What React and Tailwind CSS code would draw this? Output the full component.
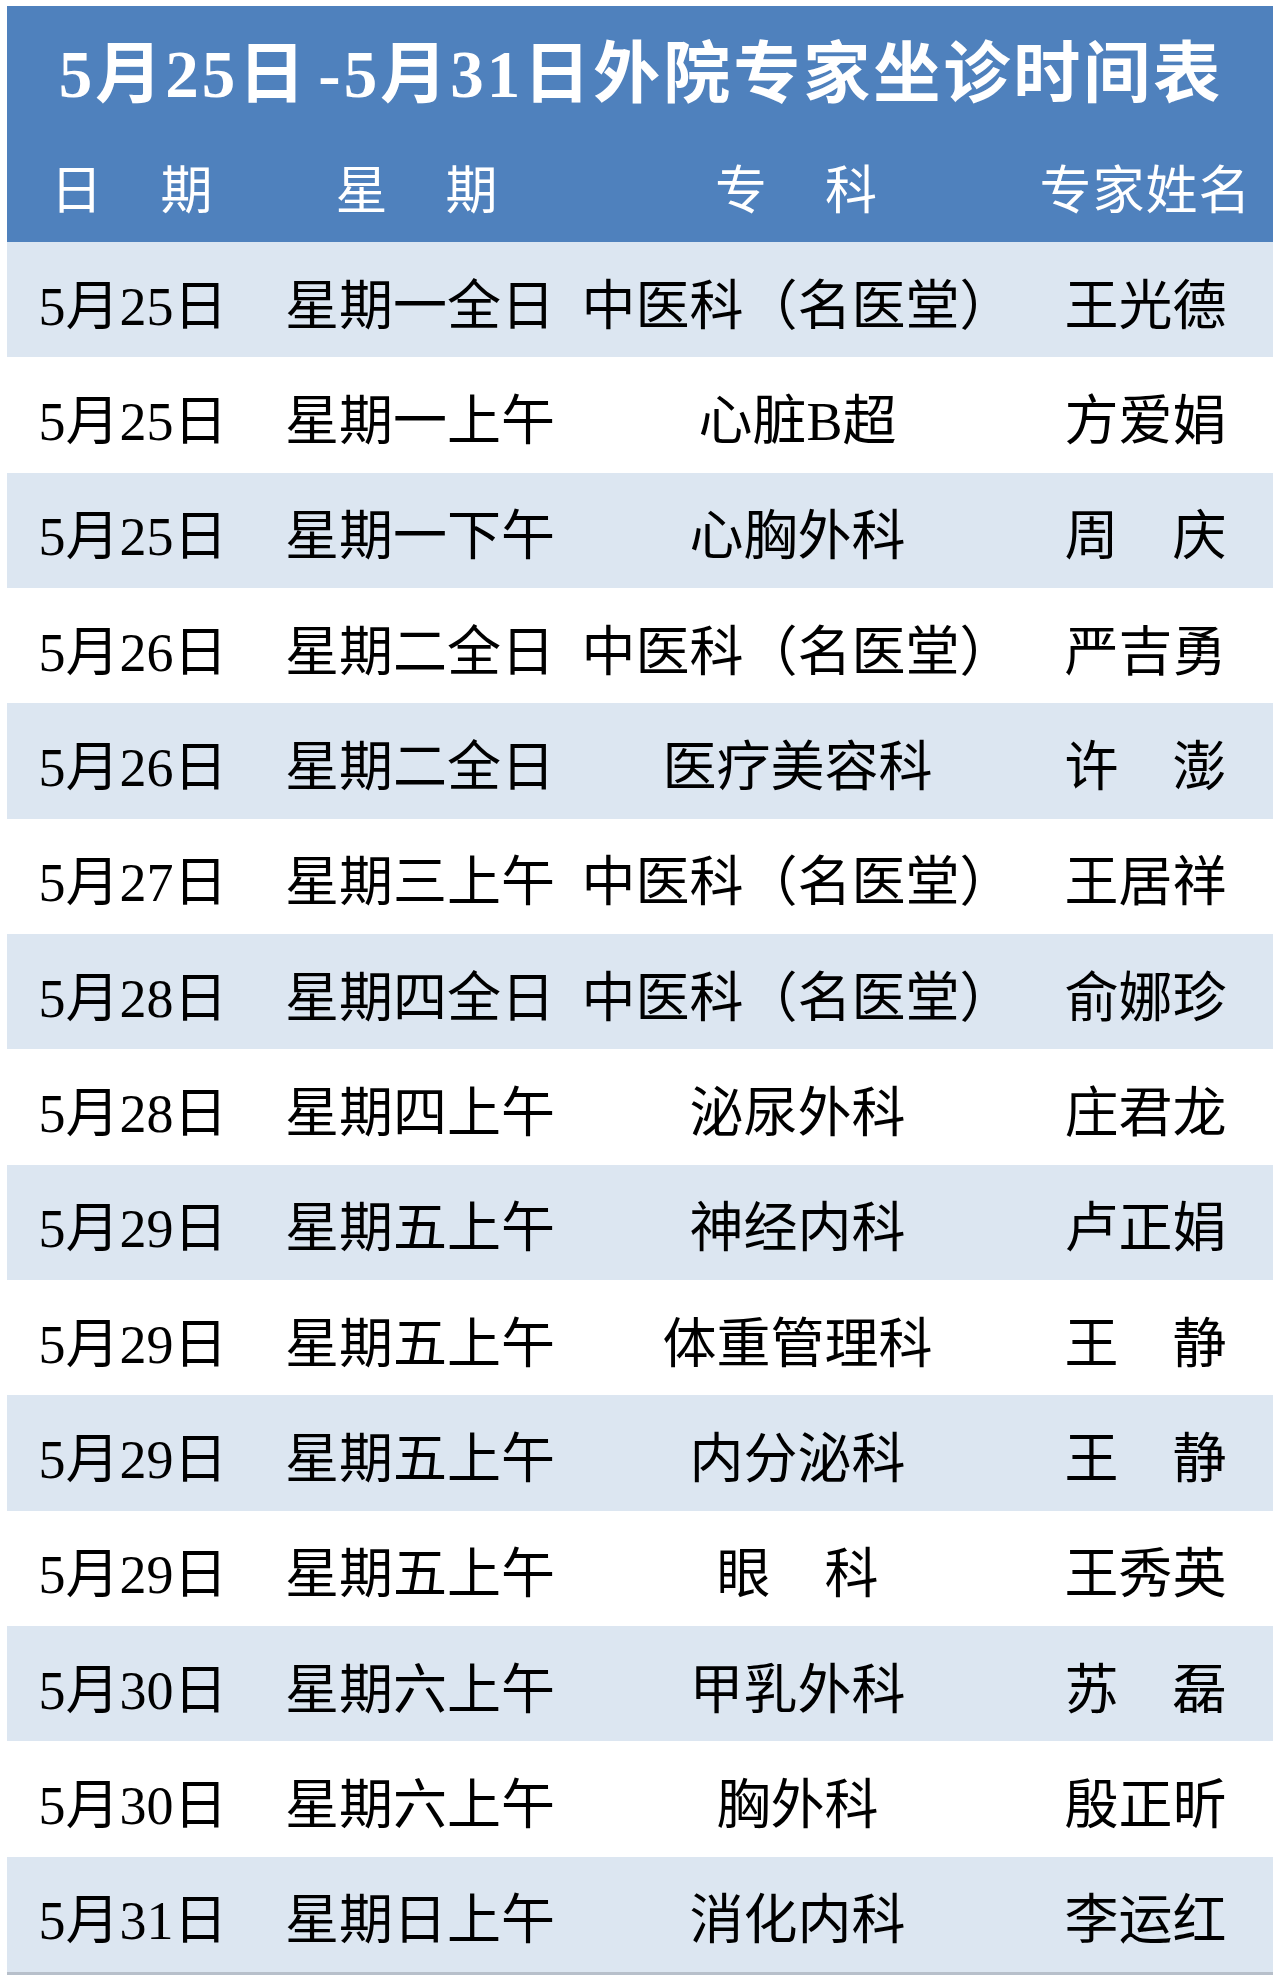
const rows = [
  ["5月25日", "星期一全日", "中医科（名医堂）", "王光德"],
  ["5月25日", "星期一上午", "心脏B超", "方爱娟"],
  ["5月25日", "星期一下午", "心胸外科", "周　庆"],
  ["5月26日", "星期二全日", "中医科（名医堂）", "严吉勇"],
  ["5月26日", "星期二全日", "医疗美容科", "许　澎"],
  ["5月27日", "星期三上午", "中医科（名医堂）", "王居祥"],
  ["5月28日", "星期四全日", "中医科（名医堂）", "俞娜珍"],
  ["5月28日", "星期四上午", "泌尿外科", "庄君龙"],
  ["5月29日", "星期五上午", "神经内科", "卢正娟"],
  ["5月29日", "星期五上午", "体重管理科", "王　静"],
  ["5月29日", "星期五上午", "内分泌科", "王　静"],
  ["5月29日", "星期五上午", "眼　科", "王秀英"],
  ["5月30日", "星期六上午", "甲乳外科", "苏　磊"],
  ["5月30日", "星期六上午", "胸外科", "殷正昕"],
  ["5月31日", "星期日上午", "消化内科", "李运红"],
];

const font = { fontFamily: '"Liberation Serif", "Noto Sans CJK SC", serif' };

const App = () => {
  return (
    <div className="bg-white w-[1280px] h-[1982px] pt-[6px] px-[7px]" style={font}>
      <div className="bg-[#4f81bd] h-[236px] flex flex-col text-white">
        <div className="h-[128px] flex items-center justify-center pt-[8px] pl-[2px]">
          <h1 className="text-[67px] font-bold tracking-[3px] leading-none">
            5月25日<span className="ml-[10px]">-</span>5月31日外院专家坐诊时间表
          </h1>
        </div>
        <div className="h-[108px] grid grid-cols-[252px_318px_441px_255px] items-center pt-[8px] text-[52px] leading-none">
          <div className="text-center tracking-[3px]">日　期</div>
          <div className="text-center tracking-[3px]">星　期</div>
          <div className="text-center tracking-[3px]">专　科</div>
          <div className="text-center tracking-[1px]">专家姓名</div>
        </div>
      </div>
      <div className="border-b-[3px] border-[#b7bfca]">
        {rows.map((row, index) => (
          <div
            key={index}
            className={`h-[115.33px] grid grid-cols-[252px_318px_441px_255px] items-center pt-[14px] text-[54px] leading-none text-black ${
              index % 2 === 0 ? "bg-[#dce6f1]" : "bg-white"
            }`}
          >
            <div className="text-center">{row[0]}</div>
            <div className="pl-[26px]">{row[1]}</div>
            <div className="text-center">{row[2]}</div>
            <div className="text-center">{row[3]}</div>
          </div>
        ))}
      </div>
    </div>
  );
};

export default App;
